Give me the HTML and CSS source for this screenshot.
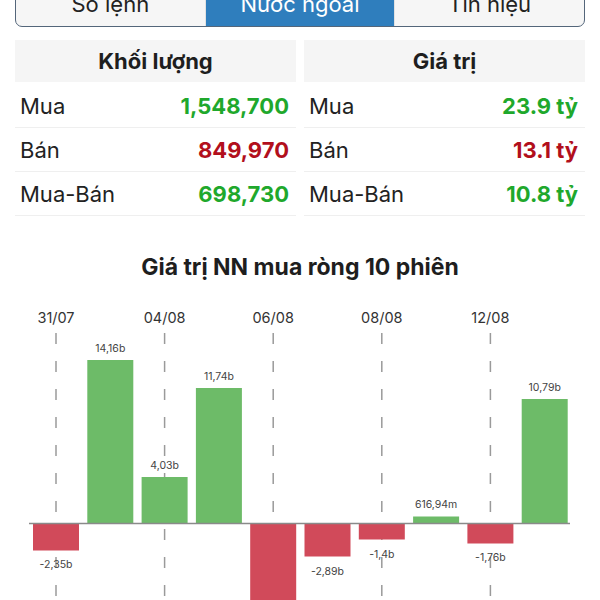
FILE: index.html
```html
<!DOCTYPE html>
<html lang="vi">
<head>
<meta charset="utf-8">
<link rel="stylesheet" href="styles.css">
</head>
<body>
<div class="page">
  <div class="tabs">
    <div class="tab">Sổ lệnh</div>
    <div class="tab active">Nước ngoài</div>
    <div class="tab">Tín hiệu</div>
  </div>
  <div class="tables">
    <div class="col">
      <div class="head">Khối lượng</div>
      <div class="row"><span class="lbl">Mua</span><span class="val up">1,548,700</span></div>
      <div class="row"><span class="lbl">Bán</span><span class="val down">849,970</span></div>
      <div class="row"><span class="lbl">Mua-Bán</span><span class="val up">698,730</span></div>
    </div>
    <div class="col">
      <div class="head">Giá trị</div>
      <div class="row"><span class="lbl">Mua</span><span class="val up">23.9 tỷ</span></div>
      <div class="row"><span class="lbl">Bán</span><span class="val down">13.1 tỷ</span></div>
      <div class="row"><span class="lbl">Mua-Bán</span><span class="val up">10.8 tỷ</span></div>
    </div>
  </div>
  <div class="chart-title">Giá trị NN mua ròng 10 phiên</div>
  <svg class="chart" width="600" height="310" viewBox="0 290 600 310">
    <g class="grid">
      <line x1="56" y1="333" x2="56" y2="600"/>
      <line x1="164.6" y1="333" x2="164.6" y2="600"/>
      <line x1="273.2" y1="333" x2="273.2" y2="600"/>
      <line x1="381.8" y1="333" x2="381.8" y2="600"/>
      <line x1="490.4" y1="333" x2="490.4" y2="600"/>
    </g>
    <g class="dates">
      <text x="56" y="323">31/07</text>
      <text x="164.6" y="323">04/08</text>
      <text x="273.2" y="323">06/08</text>
      <text x="381.8" y="323">08/08</text>
      <text x="490.4" y="323">12/08</text>
    </g>
    <g class="neg">
      <rect x="33" y="523.5" width="46" height="27"/>
      <rect x="250.2" y="523.5" width="46" height="120"/>
      <rect x="304.5" y="523.5" width="46" height="33"/>
      <rect x="358.8" y="523.5" width="46" height="16"/>
      <rect x="467.4" y="523.5" width="46" height="20"/>
    </g>
    <g class="pos">
      <rect x="87.3" y="360" width="46" height="163.5"/>
      <rect x="141.6" y="477" width="46" height="46.5"/>
      <rect x="195.9" y="388" width="46" height="135.5"/>
      <rect x="413.1" y="516.5" width="46" height="7"/>
      <rect x="521.7" y="399" width="46" height="124.5"/>
    </g>
    <line class="zero" x1="29" y1="523.5" x2="570" y2="523.5"/>
    <g class="vals">
      <text x="56" y="568">-2,35b</text>
      <text x="110.3" y="352">14,16b</text>
      <text x="164.6" y="469">4,03b</text>
      <text x="218.9" y="380">11,74b</text>
      <text x="327.5" y="575">-2,89b</text>
      <text x="381.8" y="558">-1,4b</text>
      <text x="436.1" y="508">616,94m</text>
      <text x="490.4" y="561">-1,76b</text>
      <text x="544.7" y="391">10,79b</text>
    </g>
  </svg>
</div>
</body>
</html>
```
FILE: styles.css
```css
html, body {
  margin: 0;
  padding: 0;
  background: #fff;
}
body {
  width: 600px;
  height: 600px;
  overflow: hidden;
  font-family: Inter, "Noto Sans", "Liberation Sans", sans-serif;
  color: #222;
}
.page {
  display: flex;
  flex-direction: column;
}
.tabs {
  display: flex;
  margin: -14px 15px 0 15px;
  height: 41px;
  border: 1.5px solid #54667a;
  border-radius: 7px;
  overflow: hidden;
  box-sizing: border-box;
  background: #f6f6f6;
}
.tab {
  flex: 1;
  display: flex;
  align-items: flex-end;
  justify-content: center;
  font-size: 22px;
  line-height: 26px;
  padding-bottom: 9px;
  box-sizing: border-box;
  color: #222;
  border-right: 1px solid #e2e2e2;
}
.tab:last-child { border-right: none; }
.tab.active {
  background: #2f7ebd;
  color: #fff;
}
.tables {
  display: flex;
  gap: 8px;
  margin: 13px 15px 0 15px;
}
.col {
  flex: 1;
  display: flex;
  flex-direction: column;
}
.head {
  height: 42px;
  background: #f5f5f5;
  display: flex;
  align-items: center;
  justify-content: center;
  font-weight: 700;
  font-size: 22px;
  color: #1e1e1e;
  margin-bottom: 2px;
}
.row {
  height: 44px;
  display: flex;
  align-items: center;
  justify-content: space-between;
  padding: 0 7px 0 5px;
  border-bottom: 1px solid #efefef;
  box-sizing: border-box;
}
.lbl {
  font-size: 22px;
  color: #222;
}
.val {
  font-size: 22px;
  font-weight: 700;
}
.up { color: #1fa82c; }
.down { color: #b20f1c; }
.chart-title {
  margin-top: 37px;
  text-align: center;
  font-weight: 700;
  font-size: 23px;
  line-height: 28px;
  color: #1e1e1e;
}
.chart {
  display: block;
  margin-top: 9px;
}
.grid line {
  stroke: #9a9a9a;
  stroke-width: 1.5;
  stroke-dasharray: 11 17;
}
.dates text {
  font-family: Inter, "Liberation Sans", sans-serif;
  font-size: 14.5px;
  fill: #333;
  text-anchor: middle;
}
.neg rect { fill: #d14a5a; }
.pos rect { fill: #6dbb68; }
.zero {
  stroke: #8a8a8a;
  stroke-width: 1.5;
}
.vals text {
  font-family: Inter, "Liberation Sans", sans-serif;
  font-size: 10.5px;
  fill: #444;
  text-anchor: middle;
}
```
